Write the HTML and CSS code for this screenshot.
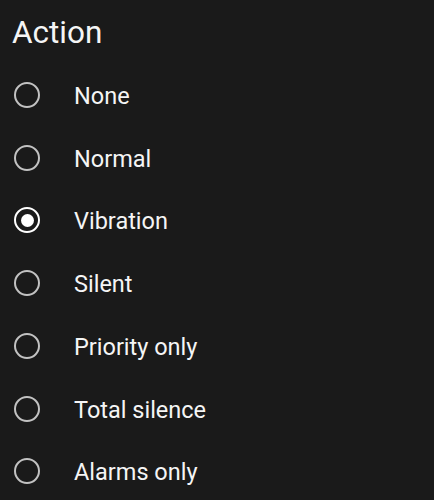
FILE: index.html
```html
<!DOCTYPE html>
<html>
<head>
<meta charset="utf-8">
<link rel="stylesheet" href="styles.css">
</head>
<body>
<div class="screen">
  <h1 class="title">Action</h1>
  <ul class="options">
    <li class="option"><span class="radio"></span><span class="label">None</span></li>
    <li class="option"><span class="radio"></span><span class="label">Normal</span></li>
    <li class="option"><span class="radio checked"></span><span class="label">Vibration</span></li>
    <li class="option"><span class="radio"></span><span class="label">Silent</span></li>
    <li class="option"><span class="radio"></span><span class="label">Priority only</span></li>
    <li class="option"><span class="radio"></span><span class="label">Total silence</span></li>
    <li class="option"><span class="radio"></span><span class="label">Alarms only</span></li>
  </ul>
</div>
</body>
</html>
```
FILE: styles.css
```css
html, body {
  margin: 0;
  padding: 0;
  background: #1a1a1a;
}
.screen {
  width: 434px;
  height: 500px;
  overflow: hidden;
  background: #1a1a1a;
  font-family: Roboto, "Noto Sans", sans-serif;
  color: #f5f5f5;
}
.title {
  margin: 15px 0 0 12px;
  font-size: 31.5px;
  line-height: 36px;
  font-weight: 400;
  color: #f5f5f5;
}
.options {
  list-style: none;
  margin: 12.6px 0 0 0;
  padding: 0;
}
.option {
  display: flex;
  align-items: center;
  height: 62.75px;
  padding-left: 14px;
}
.radio {
  box-sizing: border-box;
  width: 26px;
  height: 26px;
  border: 2.6px solid #c2c2c2;
  border-radius: 50%;
  display: flex;
  align-items: center;
  justify-content: center;
  flex: none;
}
.radio.checked {
  border-color: #ffffff;
}
.radio.checked::after {
  content: "";
  width: 13px;
  height: 13px;
  border-radius: 50%;
  background: #ffffff;
}
.label {
  margin-left: 34px;
  padding-top: 2px;
  font-size: 23.5px;
  line-height: 28px;
  color: #f5f5f5;
}
```
